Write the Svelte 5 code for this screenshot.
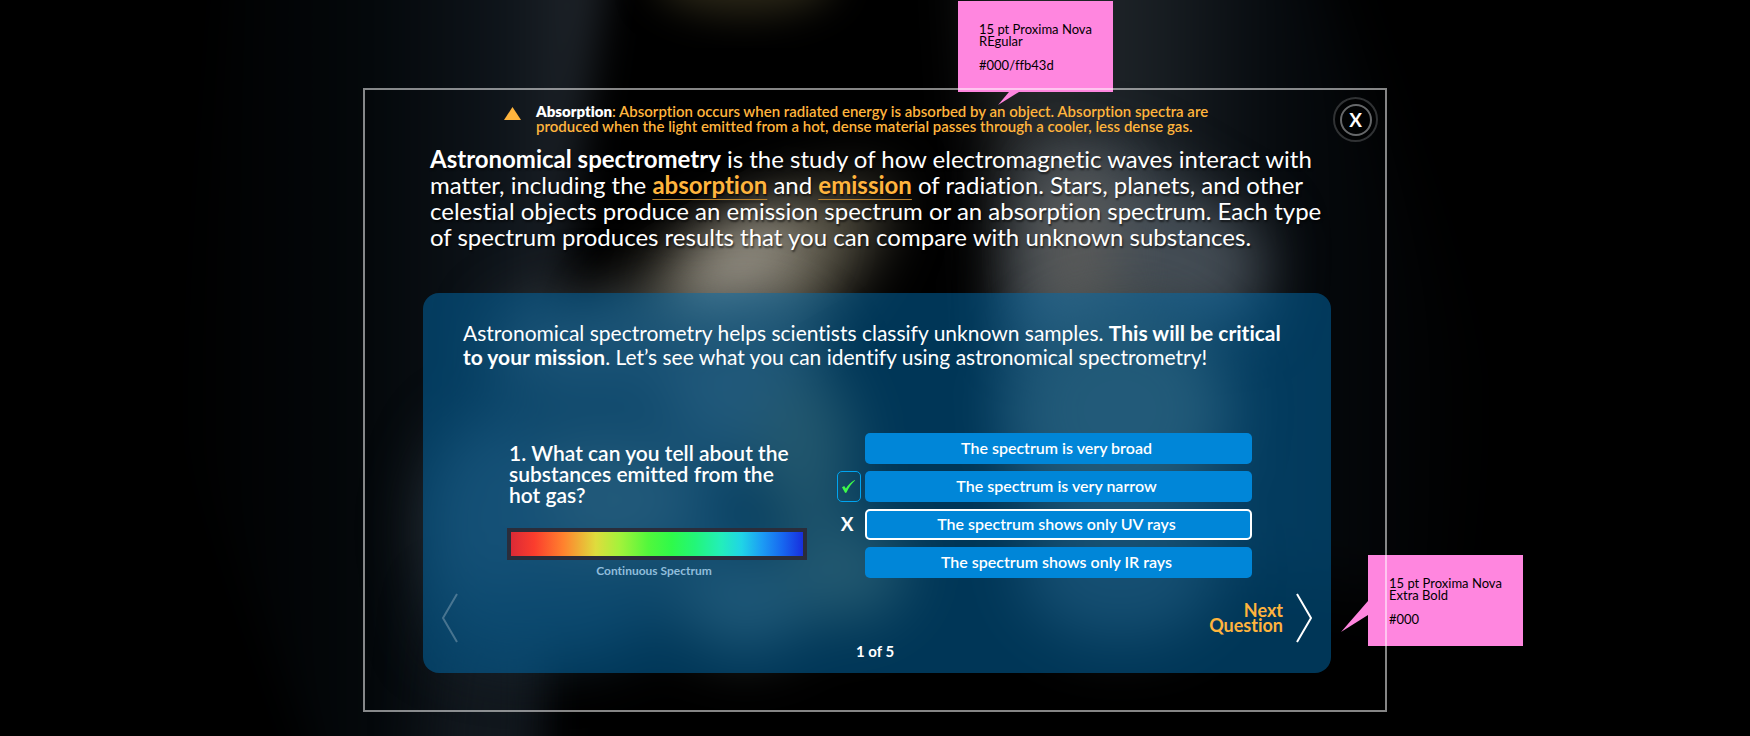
<script>
  const answers = [
    { text: 'The spectrum is very broad', mark: '' },
    { text: 'The spectrum is very narrow', mark: 'right' },
    { text: 'The spectrum shows only UV rays', mark: 'wrong' },
    { text: 'The spectrum shows only IR rays', mark: '' }
  ];
  let selected = $state(2);
</script>

<div class="page">
  <svg class="backdrop" viewBox="0 0 1750 736" preserveAspectRatio="xMidYMid slice" aria-hidden="true">
    <defs>
      <filter id="soft" x="-60%" y="-60%" width="220%" height="220%" color-interpolation-filters="sRGB"><feGaussianBlur stdDeviation="30" /></filter>
      <filter id="near" x="-50%" y="-50%" width="200%" height="200%" color-interpolation-filters="sRGB"><feGaussianBlur stdDeviation="19" /></filter>
      <linearGradient id="beamLeft" x1="0" x2="1" y1="0" y2="0">
        <stop offset="0" stop-color="#000" />
        <stop offset=".45" stop-color="#04080b" />
        <stop offset=".75" stop-color="#0e141a" />
        <stop offset="1" stop-color="#22272d" />
      </linearGradient>
      <linearGradient id="beamRight" x1="0" x2="1" y1="0" y2="0">
        <stop offset="0" stop-color="#292a2a" />
        <stop offset=".3" stop-color="#1c2227" />
        <stop offset=".6" stop-color="#060a0e" />
        <stop offset="1" stop-color="#000" />
      </linearGradient>
    </defs>
    <rect width="1750" height="736" fill="#000" />
    <path d="M230-40H608L560 300 535 520 530 800H330L180 420Z" fill="url(#beamLeft)" filter="url(#near)" />
    <path d="M975-60H1310L1480 400 1440 620 1010 500Z" fill="url(#beamRight)" filter="url(#soft)" />
    <path d="M450 600H535L530 800H430Z" fill="#12181e" filter="url(#soft)" />
    <ellipse cx="745" cy="-20" rx="90" ry="34" fill="#2c2818" filter="url(#near)" />
    <path d="M600 330 680 250 790 195 890 180 870 250 820 320 760 360 620 360Z" fill="#524e40" filter="url(#soft)" />
    <ellipse cx="742" cy="264" rx="72" ry="36" fill="#9c978c" filter="url(#soft)" transform="rotate(-30 742 264)" />
    <path d="M1030 150 1120 150 1265 235 1255 320 1020 340Z" fill="#444d55" filter="url(#soft)" />
    <ellipse cx="1075" cy="250" rx="42" ry="90" fill="#5a5b5a" filter="url(#soft)" />
    <g filter="url(#soft)">
      <path d="M500 350H740V620H500Z" fill="#1d2429" />
      <ellipse cx="590" cy="340" rx="95" ry="42" fill="#383e42" />
      <ellipse cx="745" cy="385" rx="80" ry="75" fill="#414648" />
      <ellipse cx="805" cy="450" rx="48" ry="80" fill="#45432e" />
      <ellipse cx="600" cy="500" rx="100" ry="62" fill="#434746" />
      <ellipse cx="490" cy="530" rx="65" ry="110" fill="#29353f" />
      <ellipse cx="540" cy="620" rx="110" ry="40" fill="#182731" />
      <ellipse cx="745" cy="600" rx="65" ry="50" fill="#3c4442" />
      <ellipse cx="845" cy="570" rx="62" ry="50" fill="#464734" />
      <ellipse cx="1120" cy="410" rx="105" ry="100" fill="#444944" />
      <ellipse cx="1120" cy="570" rx="100" ry="70" fill="#2b3236" />
    </g>
  </svg>

  <div class="stage">
    <aside class="note note-top">
      <p>15 pt Proxima Nova<br />REgular</p>
      <p>#000/ffb43d</p>
      <svg class="tail" width="22" height="14" viewBox="0 0 22 14" aria-hidden="true"><path d="M11 0H21L0 13Z" /></svg>
    </aside>
    <aside class="note note-side">
      <p>15 pt Proxima Nova<br />Extra Bold</p>
      <p>#000</p>
      <svg class="tail" width="27" height="32" viewBox="0 0 27 32" aria-hidden="true"><path d="M27 0V14L0 31Z" /></svg>
    </aside>

    <main class="frame">
      <header>
        <div class="term">
          <svg width="17" height="13" viewBox="0 0 17 13" aria-hidden="true"><path d="M8.5 0 17 13H0Z" fill="#ffb43d" /></svg>
          <p><b>Absorption</b>: Absorption occurs when radiated energy is absorbed by an object. Absorption spectra are produced when the light emitted from a hot, dense material passes through a cooler, less dense gas.</p>
        </div>
        <button class="close" aria-label="Close"><span>X</span></button>
      </header>

      <p class="lead"><b>Astronomical spectrometry</b> is the study of how electromagnetic waves interact with matter, including the <a href="#absorption">absorption</a> and <a href="#emission">emission</a> of radiation. Stars, planets, and other celestial objects produce an emission spectrum or an absorption spectrum. Each type of spectrum produces results that you can compare with unknown substances.</p>

      <section class="panel">
        <p class="intro">Astronomical spectrometry helps scientists classify unknown samples. <b>This will be critical to your mission</b>. Let’s see what you can identify using astronomical spectrometry!</p>

        <div class="quiz">
          <div class="question">
            <h2>1. What can you tell about the substances emitted from the hot gas?</h2>
            <figure>
              <div class="spectrum"></div>
              <figcaption>Continuous Spectrum</figcaption>
            </figure>
          </div>
          <ul class="answers">
            {#each answers as answer, i}
              <li>
                <span class="mark {answer.mark}">
                  {#if answer.mark === 'right'}
                    <svg width="13" height="13" viewBox="0 0 13 13" aria-hidden="true"><path d="M0 7.2 2.2 6 3.9 8.6C6 5.200 9 2 12.600 0L13 .6C9.600 3.600 6.600 7.800 4.500 12.600L3.200 13Z" fill="#3dfa4b" /></svg>
                  {:else if answer.mark === 'wrong'}X{/if}
                </span>
                <button class="answer" class:selected={selected === i} onclick={() => (selected = i)}>{answer.text}</button>
              </li>
            {/each}
          </ul>
        </div>

        <nav>
          <button class="step" aria-label="Previous question" disabled>
            <svg width="16" height="50" viewBox="0 0 16 50" aria-hidden="true"><path d="M15 1 1 25 15 49" /></svg>
          </button>
          <button class="step">
            <span>Next<br />Question</span>
            <svg width="16" height="50" viewBox="0 0 16 50" aria-hidden="true"><path d="M1 1 15 25 1 49" /></svg>
          </button>
        </nav>
        <p class="count">1 of 5</p>
      </section>
    </main>
  </div>
</div>

<style>
  :global(body) {
    margin: 0;
    background: #000;
  }
  .page {
    position: relative;
    display: flex;
    justify-content: center;
    box-sizing: border-box;
    min-height: 100vh;
    padding: 88px 24px 24px;
    overflow: hidden;
    color: #fff;
    font-family: Lato, 'Open Sans', sans-serif;
    font-variant-ligatures: none;
  }
  .backdrop {
    position: absolute;
    inset: 0;
    width: 100%;
    height: 100%;
  }
  p, h2, figure, ul {
    margin: 0;
    padding: 0;
  }
  button {
    padding: 0;
    border: 0;
    background: none;
    color: inherit;
    font: inherit;
    cursor: pointer;
  }
  .stage {
    position: relative;
    width: 100%;
    max-width: 1024px;
  }
  .note {
    position: absolute;
    box-sizing: border-box;
    width: 155px;
    height: 91px;
    padding: 22px 0 0 21px;
    background: #ff86df;
    color: #000;
    font-size: 13px;
    line-height: 12px;
    white-space: nowrap;
  }
  .note p + p {
    margin-top: 12px;
  }
  .note-top {
    top: -87px;
    left: 595px;
  }
  .note-side {
    top: 467px;
    left: 1005px;
  }
  .tail {
    position: absolute;
    fill: #ff86df;
  }
  .note-top .tail {
    top: 91px;
    left: 40px;
  }
  .note-side .tail {
    top: 46px;
    left: -27px;
  }
  .frame {
    position: relative;
    border: 2px solid rgba(255, 255, 255, 0.52);
  }
  header {
    display: flex;
    justify-content: space-between;
    padding: 7px 7px 0 139px;
  }
  .term {
    display: flex;
    gap: 15px;
    padding-top: 7px;
  }
  .term svg {
    flex: none;
    margin-top: 3px;
  }
  .term p {
    max-width: 690px;
    color: #ffb43d;
    font-size: 15px;
    font-weight: 600;
    line-height: 15px;
  }
  .term b {
    color: #fff;
    font-weight: 800;
  }
  .close {
    flex: none;
    display: grid;
    place-items: center;
    box-sizing: border-box;
    width: 45px;
    height: 45px;
    border: 2px solid #303234;
    border-radius: 50%;
    background: rgba(0, 0, 0, 0.6);
  }
  .close span {
    box-sizing: border-box;
    width: 32px;
    height: 32px;
    border: 2px solid #66686a;
    border-radius: 50%;
    font-size: 19px;
    font-weight: 700;
    line-height: 27px;
    text-align: center;
  }
  .lead {
    padding: 4px 53px 0 65px;
    font-size: 24px;
    line-height: 26px;
    text-shadow: 1px 2px 2px rgba(0, 0, 0, 0.6);
  }
  .lead a {
    color: #ffb43d;
    font-weight: 700;
    text-decoration: underline;
    text-decoration-color: #b8822e;
    text-decoration-thickness: 1px;
    text-decoration-skip-ink: none;
    text-underline-offset: 5px;
  }
  .panel {
    margin: 43px 54px 37px 58px;
    padding: 28px 0 13px;
    border-radius: 16px;
    background: rgba(0, 108, 174, 0.5);
  }
  .intro {
    padding: 0 40px;
    font-size: 21px;
    line-height: 24px;
  }
  .quiz {
    display: flex;
    gap: 30px;
    padding: 64px 79px 0 84px;
  }
  .question {
    flex: 0 1 300px;
  }
  h2 {
    max-width: 285px;
    padding: 9px 0 0 2px;
    font-size: 21px;
    font-weight: 600;
    line-height: 21px;
  }
  .spectrum {
    height: 24px;
    margin-top: 23px;
    border: 4px solid #2a2d3b;
    background: linear-gradient(to right, #dc2a36 0%, #fb3d2d 8%, #ff822e 18%, #dfdc3d 29%, #a5f23b 37%, #52f73c 47%, #2ffa4a 55%, #23f678 63%, #23eebb 72%, #20d4e6 79%, #1c9cf4 86%, #1767f0 93%, #182fdd 100%);
  }
  figcaption {
    margin-top: 4px;
    padding-right: 6px;
    color: #90bddb;
    font-size: 12px;
    font-weight: 700;
    line-height: 14px;
    text-align: center;
  }
  .answers {
    flex: 1;
    display: flex;
    flex-direction: column;
    gap: 7px;
    list-style: none;
  }
  li {
    display: flex;
    gap: 4px;
  }
  .mark {
    flex: none;
    display: grid;
    place-items: center;
    box-sizing: border-box;
    width: 24px;
    height: 31px;
    padding: 0 4px 2px 0;
    font-size: 19px;
    font-weight: 700;
  }
  .mark.right {
    padding: 0 1px 0 0;
    border: 1px solid #00a4f0;
    border-radius: 5px;
  }
  .answer {
    flex: 1;
    box-sizing: border-box;
    height: 31px;
    padding: 0 4px 2px 0;
    border-radius: 5px;
    background: #0086d8;
    font-size: 16px;
    font-weight: 600;
    line-height: 20px;
  }
  .answer.selected {
    border: 2px solid #fff;
  }
  nav {
    display: flex;
    justify-content: space-between;
    padding: 15px 19px 0;
  }
  .step {
    display: flex;
    align-items: center;
    gap: 13px;
    color: #ffb43d;
    font-size: 18px;
    font-weight: 700;
    line-height: 15px;
    text-align: right;
  }
  .step svg {
    fill: none;
    stroke: #fff;
    stroke-width: 2;
  }
  .step:disabled {
    opacity: 0.25;
  }
  .count {
    padding-right: 4px;
    font-size: 15px;
    font-weight: 700;
    line-height: 17px;
    text-align: center;
  }
</style>
